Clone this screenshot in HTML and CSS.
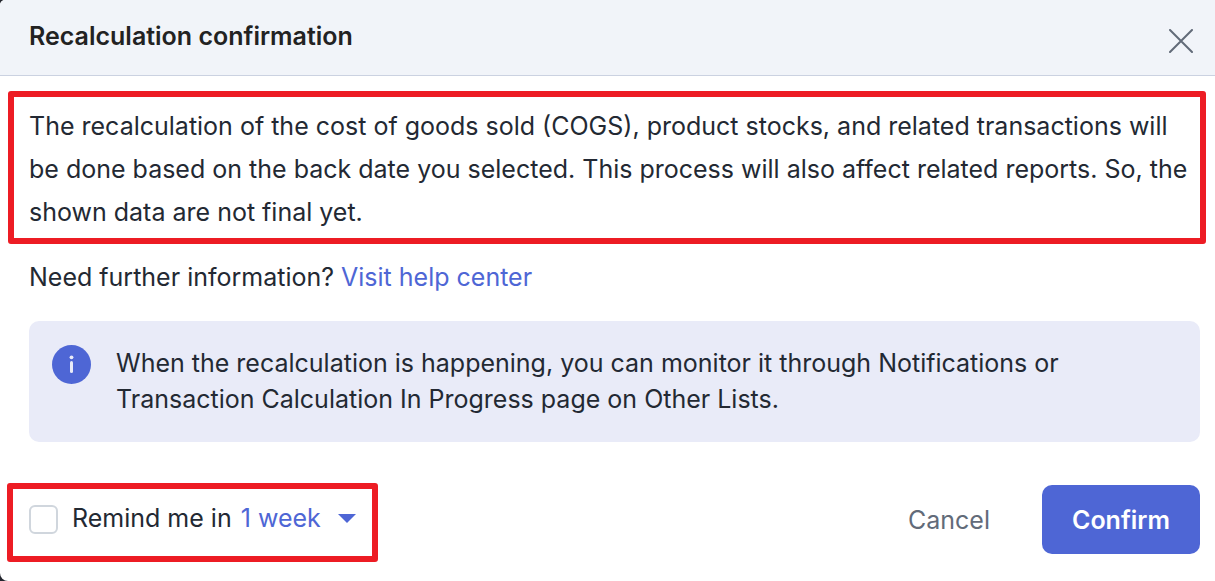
FILE: index.html
```html
<!DOCTYPE html>
<html lang="en">
<head>
    <meta charset="UTF-8">
    <meta name="viewport" content="width=device-width, initial-scale=1.0">
    <title>Recalculation confirmation</title>
    <link rel="stylesheet" href="styles.css">
</head>
<body>
    <div class="modal" role="dialog" aria-labelledby="modal-title">
        <header class="modal-header">
            <h1 class="modal-title" id="modal-title">Recalculation confirmation</h1>
            <button class="close-button" type="button" aria-label="Close">
                <svg width="24" height="24" viewBox="0 0 24 24">
                    <path d="M1 1L23 23M23 1L1 23" fill="none" stroke="#626b79" stroke-width="2" stroke-linecap="round"/>
                </svg>
            </button>
        </header>
        <main class="modal-body">
            <p class="message highlight">The recalculation of the cost of goods sold (COGS), product stocks, and related transactions will be done based on the back date you selected. This process will also affect related reports. So, the shown data are not final yet.</p>
            <p class="help">Need further information? <a class="help-link" href="#">Visit help center</a></p>
            <div class="info-box">
                <svg class="info-icon" width="39" height="39" viewBox="0 0 39 39">
                    <circle cx="19.5" cy="19.5" r="19.5" fill="#4e66d5"/>
                    <circle cx="19.5" cy="12.3" r="1.9" fill="#e9ebf8"/>
                    <path d="M19.5 17.5V26.5" stroke="#e9ebf8" stroke-width="3" stroke-linecap="round"/>
                </svg>
                <p class="info-text">When the recalculation is happening, you can monitor it through Notifications or Transaction Calculation In Progress page on Other Lists.</p>
            </div>
        </main>
        <footer class="modal-footer">
            <div class="remind highlight">
                <input class="remind-check" type="checkbox" id="remind">
                <label class="remind-label" for="remind">Remind me in</label>
                <div class="period">
                    <select class="period-select" aria-label="Reminder period">
                        <option>1 week</option>
                    </select>
                    <svg class="period-arrow" width="18" height="9" viewBox="0 0 18 9">
                        <path d="M0 0H18L9 9Z" fill="#4e66d5"/>
                    </svg>
                </div>
            </div>
            <div class="actions">
                <button class="button cancel" type="button">Cancel</button>
                <button class="button confirm" type="button">Confirm</button>
            </div>
        </footer>
    </div>
</body>
</html>
```
FILE: styles.css
```css
* {
    box-sizing: border-box;
}
body {
    margin: 0;
    background-color: #23262e;
    font-family: Inter, "Liberation Sans", sans-serif;
    font-size: 25px;
    color: #232933;
}
.modal {
    min-height: 100vh;
    background-color: #fff;
    border-radius: 5px 0 0 8px;
    overflow: hidden;
}
.modal-header {
    display: flex;
    align-items: center;
    justify-content: space-between;
    padding: 18px 20px 17px 29px;
    background-color: #f1f4f9;
    border-bottom: 1px solid #cbd2e1;
}
.modal-title {
    margin: 0 0 4px;
    font-size: 25px;
    line-height: 36px;
    font-weight: 600;
    color: #222;
}
.close-button {
    display: flex;
    margin-top: 6px;
    padding: 2px;
    border: none;
    background: none;
    cursor: pointer;
}
.highlight {
    border: 6px solid #ed1c24;
    border-radius: 3px;
}
.message {
    margin: 15px 9px 0 8px;
    padding: 8px 0 4px 15px;
    line-height: 43px;
}
.help {
    margin: 15px 15px 0 29px;
    line-height: 36px;
}
.help-link {
    color: #4e66d5;
    text-decoration: none;
}
.info-box {
    display: flex;
    gap: 25px;
    margin: 26px 15px 0 29px;
    padding: 24px 23px 25px;
    background-color: #e9ebf8;
    border-radius: 10px;
}
.info-icon {
    flex: none;
}
.info-text {
    margin: 0;
    line-height: 36px;
}
.modal-footer {
    display: flex;
    align-items: flex-start;
    justify-content: space-between;
    padding: 41px 15px 19px 7px;
}
.remind {
    display: flex;
    align-items: center;
    padding: 11px 16px 20px 16px;
}
.remind-check {
    appearance: none;
    width: 29px;
    height: 29px;
    margin: 2px 14px 0 0;
    border: 2px solid #d0d6dd;
    border-radius: 6px;
    background-color: #fff;
}
.remind-check:checked {
    background-color: #4e66d5;
}
.remind-label {
    margin-right: 9px;
    line-height: 36px;
}
.period {
    position: relative;
    display: flex;
    align-items: center;
}
.period-select {
    appearance: none;
    padding: 0 34px 0 0;
    border: none;
    background: none;
    font: inherit;
    line-height: 36px;
    color: #4e66d5;
    cursor: pointer;
}
.period-arrow {
    position: absolute;
    right: 0;
    pointer-events: none;
}
.actions {
    display: flex;
    gap: 22px;
    padding-top: 2px;
}
.button {
    height: 69px;
    padding: 0 30px;
    border: none;
    border-radius: 10px;
    font: inherit;
    cursor: pointer;
}
.cancel {
    background: none;
    color: #626b79;
}
.confirm {
    background-color: #4e66d5;
    color: #fff;
    font-weight: 600;
}
```
